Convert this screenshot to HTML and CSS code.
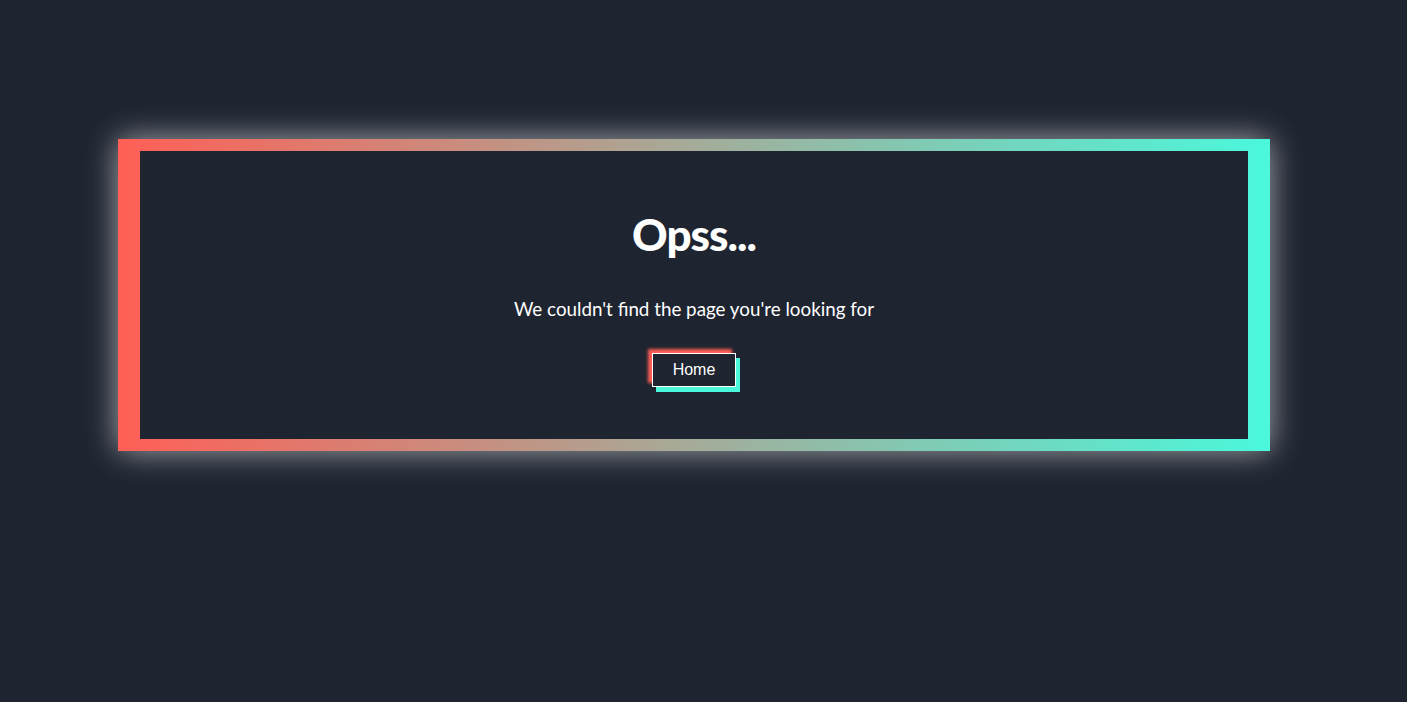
FILE: index.html
```html
<!DOCTYPE html>
<html lang="en">
<head>
<meta charset="utf-8">
<title>404</title>
<link rel="stylesheet" href="styles.css">
</head>
<body>
<main class="page">
  <div class="frame">
    <div class="inner">
      <h1 class="title">Opss...</h1>
      <p class="message">We couldn't find the page you're looking for</p>
      <a class="home-btn" href="#">Home</a>
    </div>
  </div>
</main>
</body>
</html>
```
FILE: styles.css
```css
html, body {
  margin: 0;
  padding: 0;
  background: #1e2430;
  height: 100%;
}
body {
  padding-right: 19px;
  box-sizing: border-box;
  font-family: "Lato", "Noto Sans", sans-serif;
  color: #ffffff;
}
.page {
  padding-top: 139px;
  display: flex;
  justify-content: center;
}
.frame {
  width: 1152px;
  box-sizing: border-box;
  padding: 12px 22px;
  background: linear-gradient(to right, #ff5f56, #4af8dc);
  box-shadow: 0 0 30px rgba(255, 255, 255, 0.6);
}
.inner {
  background: #1e2430;
  height: 288px;
  display: flex;
  flex-direction: column;
  align-items: center;
}
.title {
  margin: 56px 0 0;
  font-family: "Lato", sans-serif;
  font-weight: 900;
  font-size: 44px;
  line-height: 54px;
  letter-spacing: -1px;
}
.message {
  margin: 36px 0 0;
  font-size: 18.8px;
  line-height: 24px;
}
.home-btn {
  margin-top: 32px;
  display: inline-block;
  box-sizing: border-box;
  width: 84px;
  height: 34px;
  line-height: 32px;
  text-align: center;
  border: 1px solid #ffffff;
  color: #ffffff;
  text-decoration: none;
  font-family: "Liberation Sans", Arial, sans-serif;
  font-size: 16px;
  box-shadow: -4px -4px 3px #ff5f56, 4px 5px 0 #4af8dc;
  background: #1e2430;
}
```
